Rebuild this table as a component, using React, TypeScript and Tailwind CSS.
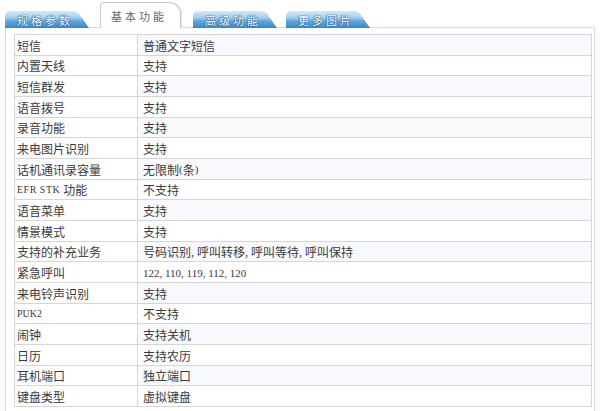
import React from "react";

const serif = "font-['Liberation_Serif']";

const rows: [React.ReactNode, React.ReactNode][] = [
  ["短信", "普通文字短信"],
  ["内置天线", "支持"],
  ["短信群发", "支持"],
  ["语音拨号", "支持"],
  ["录音功能", "支持"],
  ["来电图片识别", "支持"],
  ["话机通讯录容量", <>无限制<span className={`${serif} text-[11px]`}>(</span>条<span className={`${serif} text-[11px]`}>)</span></>],
  [<><span className={`${serif} text-[10px] tracking-[0.5px]`}>EFR STK&nbsp;</span>功能</>, "不支持"],
  ["语音菜单", "支持"],
  ["情景模式", "支持"],
  ["支持的补充业务", <>号码识别<span className={serif}>,&nbsp;</span>呼叫转移<span className={serif}>,&nbsp;</span>呼叫等待<span className={serif}>,&nbsp;</span>呼叫保持</>],
  ["紧急呼叫", <span className={`${serif} text-[11px]`}>122, 110, 119, 112, 120</span>],
  ["来电铃声识别", "支持"],
  [<span className={`${serif} text-[10px]`}>PUK2</span>, "不支持"],
  ["闹钟", "支持关机"],
  ["日历", "支持农历"],
  ["耳机端口", "独立端口"],
  ["键盘类型", "虚拟键盘"],
];

function BlueTab({ label, ml }: { label: string; ml: string }) {
  return (
    <div
      className={`${ml} relative h-[17px] w-[84px] rounded-tl-[5px] bg-[linear-gradient(#d2eafa,#a2cff0_40%,#62a8dc_58%,#3a86c6)] [clip-path:polygon(0_0,83%_0,88%_15%,100%_100%,0_100%)] flex items-center pl-[12px] pt-[1px] text-[11px] tracking-[3px] text-white font-['Noto_Sans_CJK_SC',sans-serif] [text-shadow:0_0_1px_#1c5b97,0_0_1px_#1c5b97,0_0_1px_#1c5b97]`}
    >
      {label}
    </div>
  );
}

export default function App() {
  return (
    <div className="w-[600px] h-[411px] bg-white overflow-hidden font-['Noto_Sans_CJK_SC',sans-serif] text-[#3a3a3a]">
      <div className="flex items-end h-[28px] pl-[5px] relative z-10">
        <BlueTab label="规格参数" ml="" />
        <div className="ml-[11px] h-[26px] w-[81px] bg-white border border-b-0 border-[#c9c9c9] rounded-tl-[4px] rounded-tr-[12px] flex items-center pl-[10px] pt-[1px] text-[11px] tracking-[3px] text-[#666] shadow-[1px_0_1px_#e2e2e2]">
          基本功能
        </div>
        <BlueTab label="高级功能" ml="ml-[12px]" />
        <BlueTab label="更多图片" ml="ml-[9px]" />
      </div>
      <div className="-mt-[1px] ml-[5px] w-[590px] h-[400px] border border-[#dcdcdc] pt-[6px] pl-[8px] pr-[2px]">
        <div className="border-t border-l border-r border-[#d6d6d6] w-[578px]">
          {rows.map(([k, v], i) => (
            <div
              key={i}
              className={`flex h-[20.67px] border-b border-[#d6d6d6] text-[12px] leading-none ${i % 2 === 0 ? "bg-[#f7f9fc]" : "bg-white"}`}
            >
              <div className="w-[123px] shrink-0 border-r border-[#d6d6d6] flex items-center pl-[2px] pt-[2px] bg-white">{k}</div>
              <div className="flex-1 flex items-center pl-[5px] pt-[2px]">{v}</div>
            </div>
          ))}
        </div>
      </div>
    </div>
  );
}
